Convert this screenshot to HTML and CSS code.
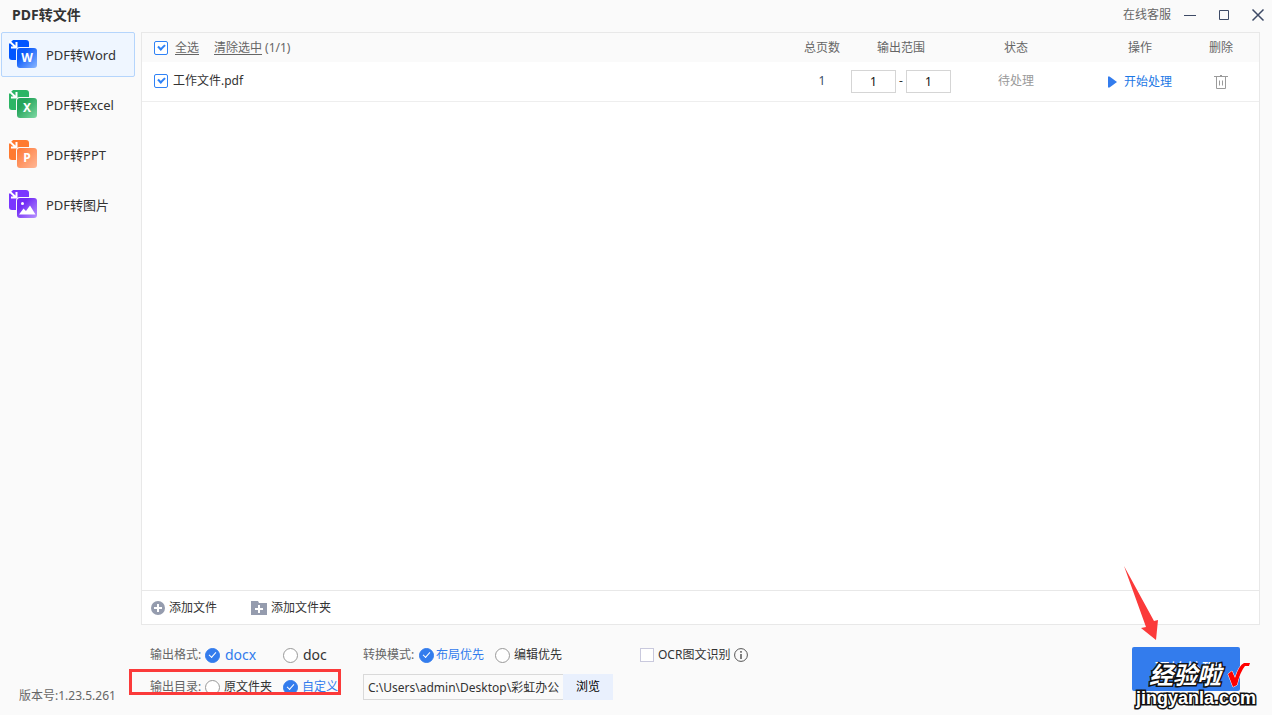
FILE: index.html
```html
<!DOCTYPE html>
<html lang="zh-CN">
<head>
<meta charset="utf-8">
<title>PDF转文件</title>
<link rel="stylesheet" href="styles.css">
</head>
<body>
<header class="titlebar">
  <h1 class="title">PDF转文件</h1>
  <a class="service" href="#">在线客服</a>
  <button class="win-btn" aria-label="最小化"><svg width="14" height="14" viewBox="0 0 14 14"><path d="M1 7.500h12" class="line"/></svg></button>
  <button class="win-btn" aria-label="最大化"><svg width="14" height="14" viewBox="0 0 14 14"><path d="M2.500 2.500h9v9h-9z" class="line"/></svg></button>
  <button class="win-btn" aria-label="关闭"><svg width="14" height="14" viewBox="0 0 14 14"><path d="M1.500 1.500l11 11M12.500 1.500l-11 11" class="line diagonal"/></svg></button>
</header>
<div class="shell">
  <aside class="sidebar">
    <nav class="nav">
      <a class="nav-item active" href="#">
        <svg class="nav-icon" viewBox="0 0 28 29">
          <defs><linearGradient id="gw" x1="0" y1="0" x2="1" y2="1"><stop offset="0.3" stop-color="#0c5bfa"/><stop offset="1" stop-color="#8db8ff"/></linearGradient></defs>
          <path d="M4 0H17a3 3 0 0 1 3 3V20H3a3 3 0 0 1-3-3V4z" fill="#0055ff"/>
          <path d="M0 1L6.500 7M7.500 2V7.500H2" class="arrow"/>
          <rect x="7" y="7" width="22" height="22" rx="4" fill="#eff6ff"/>
          <rect x="8" y="8" width="20" height="20" rx="3" fill="url(#gw)"/>
          <text x="18" y="22" class="letter">W</text>
        </svg>
        <span>PDF转Word</span>
      </a>
      <a class="nav-item" href="#">
        <svg class="nav-icon" viewBox="0 0 28 29">
          <defs><linearGradient id="gx" x1="0" y1="0" x2="1" y2="1"><stop offset="0.300" stop-color="#24a45b"/><stop offset="1" stop-color="#80d9a4"/></linearGradient></defs>
          <path d="M4 0H17a3 3 0 0 1 3 3V20H3a3 3 0 0 1-3-3V4z" fill="#2cb565"/>
          <path d="M0 1L6.500 7M7.500 2V7.500H2" class="arrow"/>
          <rect x="7" y="7" width="22" height="22" rx="4" fill="#fafafa"/>
          <rect x="8" y="8" width="20" height="20" rx="3" fill="url(#gx)"/>
          <text x="18" y="22" class="letter">X</text>
        </svg>
        <span>PDF转Excel</span>
      </a>
      <a class="nav-item" href="#">
        <svg class="nav-icon" viewBox="0 0 28 29">
          <defs><linearGradient id="gp" x1="0" y1="0" x2="1" y2="1"><stop offset="0" stop-color="#ff7633"/><stop offset="1" stop-color="#ffb796"/></linearGradient></defs>
          <path d="M4 0H17a3 3 0 0 1 3 3V20H3a3 3 0 0 1-3-3V4z" fill="#ff7a30"/>
          <path d="M0 1L6.500 7M7.500 2V7.500H2" class="arrow"/>
          <rect x="7" y="7" width="22" height="22" rx="4" fill="#fafafa"/>
          <rect x="8" y="8" width="20" height="20" rx="3" fill="url(#gp)"/>
          <text x="18" y="22" class="letter">P</text>
        </svg>
        <span>PDF转PPT</span>
      </a>
      <a class="nav-item" href="#">
        <svg class="nav-icon" viewBox="0 0 28 29">
          <defs><linearGradient id="gi" x1="0" y1="0" x2="1" y2="1"><stop offset="0.300" stop-color="#722cf5"/><stop offset="1" stop-color="#b894ff"/></linearGradient></defs>
          <path d="M4 0H17a3 3 0 0 1 3 3V20H3a3 3 0 0 1-3-3V4z" fill="#7a36ff"/>
          <path d="M0 1L6.500 7M7.500 2V7.500H2" class="arrow"/>
          <rect x="7" y="7" width="22" height="22" rx="4" fill="#fafafa"/>
          <rect x="8" y="8" width="20" height="20" rx="3" fill="url(#gi)"/>
          <circle cx="13.500" cy="13.500" r="1.500" fill="#fff"/>
          <path d="M10 24.500l4.500-6 2.500 2.500 4-5.500 5.500 9z" fill="#fff"/>
        </svg>
        <span>PDF转图片</span>
      </a>
    </nav>
    <p class="version">版本号:1.23.5.261</p>
  </aside>
  <main class="main">
    <section class="panel">
      <table class="files">
        <colgroup><col><col class="c-pages"><col class="c-range"><col class="c-status"><col class="c-action"><col class="c-delete"></colgroup>
        <thead>
          <tr>
            <th class="name"><div class="name-line head"><input class="check" type="checkbox" id="all" checked><label class="link" for="all">全选</label><button class="link clear">清除选中</button><span>(1/1)</span></div></th>
            <th>总页数</th><th>输出范围</th><th>状态</th><th>操作</th><th class="del">删除</th>
          </tr>
        </thead>
        <tbody>
          <tr>
            <td class="name"><div class="name-line"><input class="check" type="checkbox" id="file1" checked><label for="file1">工作文件.pdf</label></div></td>
            <td class="pages">1</td>
            <td><div class="range"><input class="page-input" type="text" value="1" aria-label="起始页"><span>-</span><input class="page-input" type="text" value="1" aria-label="结束页"></div></td>
            <td class="pending">待处理</td>
            <td><button class="start-one"><svg width="9" height="12" viewBox="0 0 9 12"><path d="M0 .5h1.500L9 6 1.500 11.500H0z" fill="#337ced"/></svg>开始处理</button></td>
            <td class="del"><button class="trash" aria-label="删除"><svg width="14" height="16" viewBox="0 0 14 16"><path d="M0 2.500h14M6 1.500h2M2.500 3v11.500h9V3M5.500 6.500v5M8.500 6.500v5" fill="none" stroke="#9b9b9b"/></svg></button></td>
          </tr>
        </tbody>
      </table>
      <div class="add-bar">
        <button class="add"><svg width="14" height="14" viewBox="0 0 14 14"><circle cx="7" cy="7" r="7" fill="#959cae"/><path d="M7 3v8M3 7h8" stroke="#fff" stroke-width="2"/></svg>添加文件</button>
        <button class="add"><svg width="16" height="14" viewBox="0 0 16 14"><path d="M0 0h7l1 2h8v12H0z" fill="#959cae"/><path d="M8 4v8M4 8h8" stroke="#fff" stroke-width="2"/></svg>添加文件夹</button>
      </div>
    </section>
    <form class="options">
      <div class="group first">
        <div class="row">
          <span class="caption">输出格式:</span>
          <label class="opt big wide"><input class="radio" type="radio" name="fmt" checked><span>docx</span></label>
          <label class="opt big"><input class="radio" type="radio" name="fmt"><span>doc</span></label>
        </div>
        <div class="row">
          <span class="caption">输出目录:</span>
          <label class="opt wide"><input class="radio" type="radio" name="dir"><span>原文件夹</span></label>
          <label class="opt"><input class="radio" type="radio" name="dir" checked><span>自定义</span></label>
        </div>
        <div class="highlight"></div>
      </div>
      <div class="group second">
        <div class="row">
          <span class="caption">转换模式:</span>
          <label class="opt mode"><input class="radio" type="radio" name="mode" checked><span>布局优先</span></label>
          <label class="opt"><input class="radio" type="radio" name="mode"><span>编辑优先</span></label>
        </div>
        <div class="row">
          <input class="path" type="text" aria-label="输出目录" value="C:\Users\admin\Desktop\彩虹办公"><button class="browse" type="button">浏览</button>
        </div>
      </div>
      <div class="group third">
        <div class="row">
          <input class="check plain" type="checkbox" id="ocr"><label for="ocr">OCR图文识别</label>
          <svg width="14" height="14" viewBox="0 0 14 14"><circle cx="7" cy="7" r="6.400" fill="none" stroke="#555"/><path d="M7 3v1.800M7 6v5" stroke="#555" stroke-width="1.500"/></svg>
        </div>
      </div>
      <button class="start-all" type="button">开始处理</button>
    </form>
  </main>
</div>
<svg class="pointer" width="36" height="76" viewBox="0 0 36 76"><path d="M1 0L31 55l4-1-2 20L18 62l5-1z" fill="#fb3a3a"/></svg>
<div class="watermark">
  <div class="mark-top"><span>经验啦</span><svg width="24" height="26" viewBox="0 0 24 26"><path d="M1 12l4-3 3 7Q12 3 17 1h6l-1 3h-4Q13 10 10 23l-4 2z" fill="#f00" stroke="#fff" stroke-width="1"/></svg></div>
  <div class="mark-site">jingyanla.com</div>
</div>
</body>
</html>
```
FILE: styles.css
```css
* { box-sizing: border-box; }

body {
  margin: 0;
  height: 100vh;
  display: flex;
  flex-direction: column;
  position: relative;
  overflow: hidden;
  background: #fafafa;
  color: #333;
  font: 12px/16px "Noto Sans", "Noto Sans CJK SC", sans-serif;
}

button, input { font: inherit; color: inherit; }
button { background: none; border: 0; padding: 0; white-space: nowrap; }
a { color: inherit; text-decoration: none; }
input { margin: 0; }
svg { flex: none; }

.titlebar {
  display: flex;
  align-items: center;
  height: 32px;
  padding: 0 7px 3px 12px;
}
.title { flex: 1; margin: 0; font-size: 14px; line-height: 20px; }
.service { margin-right: 12px; color: #666; }
.win-btn { display: flex; width: 14px; margin-left: 20px; }
.service + .win-btn { margin-left: 0; }
.line { fill: none; stroke: #3d4a66; stroke-width: 1; }
.diagonal { stroke-width: 1.5; }

.shell { flex: 1; display: flex; min-height: 0; }

.sidebar {
  display: flex;
  flex-direction: column;
  justify-content: space-between;
  width: 141px;
  padding: 0 6px 11px 1px;
}
.nav { display: flex; flex-direction: column; gap: 5px; }
.nav-item {
  display: flex;
  align-items: center;
  gap: 9px;
  height: 45px;
  padding-left: 7px;
  border: 1px solid transparent;
  border-radius: 2px;
  font-size: 13px;
}
.nav-item.active { background: #eff6ff; border-color: #b5d5fc; }
.nav-icon { width: 28px; height: 29px; }
.arrow { fill: none; stroke: #fff; stroke-width: 2; }
.letter { fill: #fff; font: bold 12px "Noto Sans", sans-serif; text-anchor: middle; }
.version { margin: 0 0 0 18px; color: #666; }

.main {
  flex: 1;
  display: flex;
  flex-direction: column;
  min-width: 0;
  padding-right: 12px;
}
.panel {
  flex: 1;
  display: flex;
  flex-direction: column;
  justify-content: space-between;
  background: #fff;
  border: 1px solid #e8e8e8;
}
.files { width: 100%; table-layout: fixed; border-collapse: collapse; }
.c-pages { width: 58px; }
.c-range { width: 100px; }
.c-status { width: 130px; }
.c-action { width: 118px; }
.c-delete { width: 60px; }
th, td { padding: 0; text-align: center; font-weight: normal; white-space: nowrap; }
th { height: 29px; background: #fafafa; color: #666; }
td { height: 39px; border-bottom: 1px solid #eee; }
.name { padding-left: 12px; }
.name-line { display: flex; align-items: center; gap: 5px; }
.name-line.head { gap: 7px; }
.link { text-decoration: underline; text-underline-offset: 2px; }
.clear { margin-left: 8px; }
.name-line.head span { margin-left: -4px; }
.del { padding-right: 16px; }
.pages { color: #3b4c66; }
.pending { color: #999; }
.range { display: flex; align-items: center; justify-content: space-between; }
.page-input {
  width: 45px;
  height: 23px;
  border: 1px solid #d5d5d5;
  background: #fff;
  color: #111;
  text-align: center;
}
.start-one { display: inline-flex; align-items: center; gap: 7px; color: #1c78e5; vertical-align: middle; }
.trash { display: inline-flex; vertical-align: middle; }

.check {
  appearance: none;
  position: relative;
  flex: none;
  width: 14px;
  height: 14px;
  border: 1px solid #2f82f6;
  border-radius: 2px;
  background: #fff;
}
.check:checked::after {
  content: "";
  position: absolute;
  left: 3px;
  top: 2px;
  width: 7px;
  height: 4px;
  border: solid #2f82f6;
  border-width: 0 0 2px 2px;
  box-sizing: content-box;
  width: 5px;
  height: 3px;
  transform: rotate(-45deg);
}
.check.plain { border-color: #c9c9dd; border-radius: 0; }

.add-bar {
  display: flex;
  gap: 34px;
  height: 34px;
  padding-left: 9px;
  border-top: 1px solid #e8e8e8;
}
.add { display: flex; align-items: center; gap: 4px; }

.options { display: flex; height: 90px; padding: 14px 20px 0 9px; }
.group { display: flex; flex-direction: column; }
.row { display: flex; align-items: center; height: 32px; white-space: nowrap; }
.first { position: relative; width: 213px; }
.second { width: 277px; }
.third { flex: 1; }
.third .row { gap: 4px; }
.caption { width: 55px; color: #666; }
.second .caption { width: 56px; }
.opt { display: flex; align-items: center; gap: 4px; }
.opt.wide { width: 78px; }
.opt.mode { width: 76px; gap: 2px; }
.opt.big { font-size: 14px; gap: 5px; }
.opt:has(:checked) { color: #337ced; }
.radio {
  appearance: none;
  position: relative;
  flex: none;
  width: 15px;
  height: 15px;
  border: 1px solid #999;
  border-radius: 50%;
  background: #fff;
}
.radio:checked { background: #337ced; border-color: #337ced; }
.radio:checked::after {
  content: "";
  position: absolute;
  left: 3px;
  top: 3px;
  box-sizing: content-box;
  width: 6px;
  height: 3px;
  border: solid #fff;
  border-width: 0 0 1px 1px;
  transform: rotate(-48deg);
}
.highlight {
  position: absolute;
  left: -21px;
  top: 30px;
  width: 212px;
  height: 26px;
  border: 3px solid #fb3a3a;
}
.path {
  width: 200px;
  height: 26px;
  padding: 0 1px 0 4px;
  border: 1px solid #d9d9d9;
  border-right: 0;
  background: #fafafa;
}
.browse { width: 50px; height: 26px; background: #e9f0fd; color: #000; }
.start-all {
  width: 108px;
  height: 44px;
  margin-top: 8px;
  border-radius: 2px;
  background: #337ced;
  color: #fff;
  font-size: 16px;
}

.pointer { position: absolute; right: 113px; bottom: 73px; }
.watermark {
  position: absolute;
  right: 16px;
  bottom: 7px;
  color: #fff;
  font-weight: bold;
  -webkit-text-stroke: 3px #111;
  paint-order: stroke fill;
}
.mark-top {
  display: flex;
  align-items: center;
  gap: 6px;
  height: 26px;
  padding-left: 13px;
  font-size: 24px;
  font-style: italic;
}
.mark-site { font: bold 18px/20px "Liberation Sans", sans-serif; }
```
